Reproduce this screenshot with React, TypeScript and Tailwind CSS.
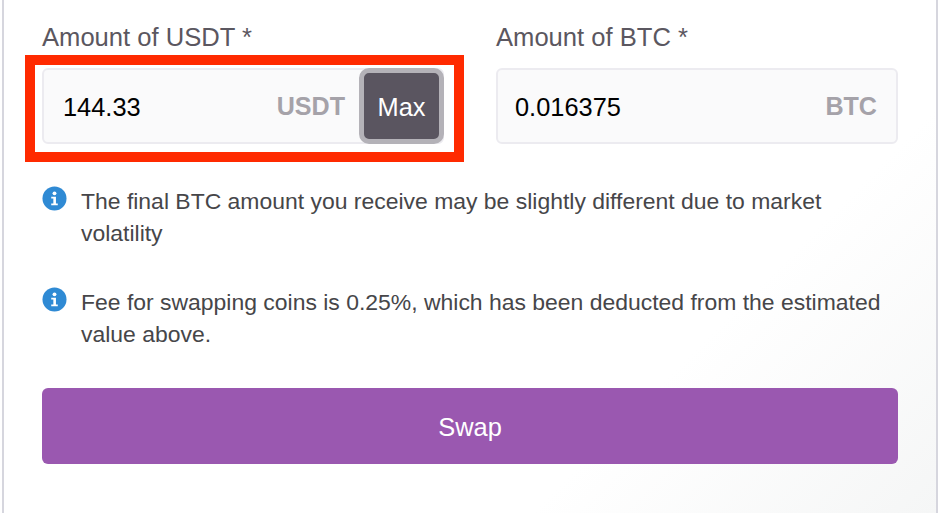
function InfoIcon() {
  return (
    <svg viewBox="0 0 26 26" className="w-[25px] h-[25px] shrink-0">
      <circle cx="13" cy="13" r="12.5" fill="#2f8ad4" />
      <circle cx="13" cy="7.6" r="2" fill="#fff" />
      <path d="M9.6 11.2h4.9v7h1.9v1.9H9.6v-1.9h2.2v-5.1H9.6z" fill="#fff" />
    </svg>
  );
}

function Note({ children }: { children: React.ReactNode }) {
  return (
    <div className="flex gap-[14px]">
      <InfoIcon />
      <p className="text-[22.95px] leading-[32px] text-[#464649] w-[805px] -mt-[1px]">{children}</p>
    </div>
  );
}

export default function App() {
  return (
    <div className="relative w-[940px] h-[514px] overflow-hidden bg-white font-['Liberation_Sans',Arial,sans-serif]">
      <div className="mx-[2px] w-[936px] h-[513px] border-x-2 border-[#d6d6de] bg-[linear-gradient(135deg,#ffffff_0%,#ffffff_72%,#f5f6f6_100%)] px-[38px] pt-[22px]">
        <div className="grid grid-cols-[402px_402px] gap-x-[52px]">
          <div>
            <label className="block text-[25.6px] leading-[31px] text-[#5b5760] mb-[15px]">Amount of USDT *</label>
            <div className="flex items-center h-[76px] bg-[#fafafb] border-2 border-[#ecebf0] rounded-[6px]">
              <span className="flex-1 pl-[19px] pt-[2px] text-[25.4px] text-black">144.33</span>
              <span className="pt-[2px] text-[25.1px] font-bold text-[#a5a2a9] mr-[14px]">USDT</span>
              <button className="w-[85px] h-[76px] -mr-[2px] shrink-0 pt-[2px] bg-[#5a5560] border-[5px] border-[#b4b2b8] rounded-[10px] text-[25.4px] text-white">Max</button>
            </div>
          </div>
          <div>
            <label className="block text-[25.6px] leading-[31px] text-[#5b5760] mb-[15px]">Amount of BTC *</label>
            <div className="flex items-center h-[76px] bg-[#fafafb] border-2 border-[#ecebf0] rounded-[6px]">
              <span className="flex-1 pl-[17px] pt-[2px] text-[25.4px] text-black">0.016375</span>
              <span className="pt-[2px] text-[25.1px] font-bold text-[#a5a2a9] mr-[19px]">BTC</span>
            </div>
          </div>
        </div>
        <div className="flex flex-col gap-[38px] mt-[42px]">
          <Note>The final BTC amount you receive may be slightly different due to market volatility</Note>
          <Note>Fee for swapping coins is 0.25%, which has been deducted from the estimated value above.</Note>
        </div>
        <button className="block mt-[38px] w-[856px] h-[76px] pt-[2px] rounded-[6px] bg-[#9a58b0] text-[25.4px] text-white">Swap</button>
      </div>
      {/* annotation over the first field */}
      <div className="absolute left-[25px] top-[55px] w-[439px] h-[107px] border-[10px] border-[#ff2a00]" />
    </div>
  );
}
